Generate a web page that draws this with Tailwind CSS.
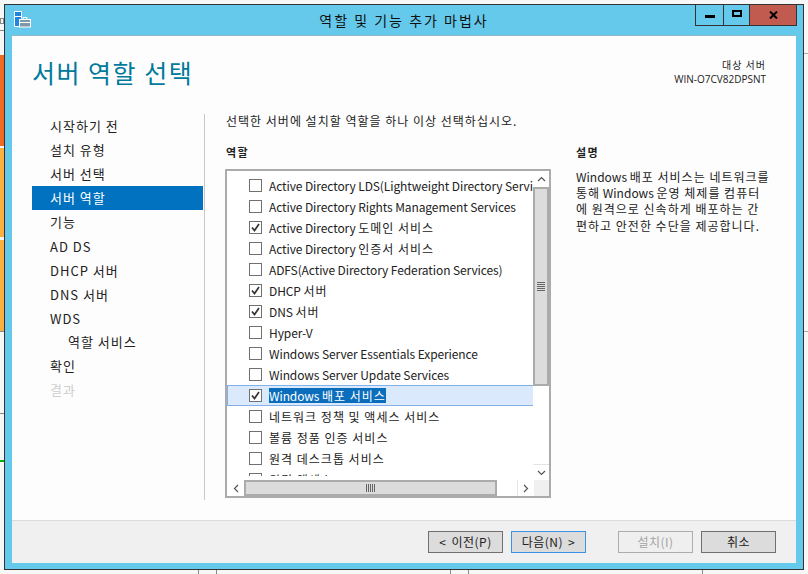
<!DOCTYPE html>
<html>
  <head>
    <meta charset="utf-8" />
    <title>역할 및 기능 추가 마법사</title>
    <script src="https://cdn.jsdelivr.net/npm/@tailwindcss/browser@4"></script>
  </head>

  <body class="w-[808px] h-[574px] overflow-hidden relative bg-[#f7f7f7]">
    <!-- desktop behind the wizard -->
    <div class="absolute left-0 top-[18px] w-[4px] h-[6px] border border-[#888]"></div>
    <div class="absolute left-0 top-[30px] w-[4px] h-px bg-[#888]"></div>
    <div class="absolute left-0 top-[55px] w-[4px] h-[91px] bg-[#f26a21]"></div>
    <div class="absolute left-0 top-[148px] w-[4px] h-[89px] bg-[#fbb040]"></div>
    <div class="absolute left-0 top-[240px] w-[4px] h-[91px] bg-[#fbb040]"></div>
    <div class="absolute left-0 top-[331px] w-[4px] h-px bg-[#888]"></div>
    <div class="absolute left-0 top-[413px] w-[4px] h-px bg-[#888]"></div>
    <div class="absolute left-0 top-[460px] w-[4px] h-[2px] bg-[#00b000]"></div>
    <div class="absolute right-0 top-[53px] w-[4px] h-px bg-[#aaa]"></div>
    <div class="absolute right-0 top-[331px] w-[4px] h-px bg-[#aaa]"></div>
    <div class="absolute left-[198px] top-[570px] w-px h-[4px] bg-[#888]"></div>
    <div class="absolute left-[216px] top-[570px] w-px h-[4px] bg-[#888]"></div>
    <div class="absolute left-[450px] top-[570px] w-px h-[4px] bg-[#888]"></div>
    <div class="absolute left-[468px] top-[570px] w-px h-[4px] bg-[#888]"></div>
    <div class="absolute left-[702px] top-[570px] w-px h-[4px] bg-[#888]"></div>

    <!-- wizard window -->
    <div class="absolute left-[4px] top-[4px] w-[800px] h-[566px] border border-[#333] bg-[#65c9eb] flex flex-col"
      style='font-family: "Noto Sans CJK KR", "Noto Sans", sans-serif;'>
      <!-- title bar -->
      <div class="h-[30px] flex items-start relative shrink-0">
        <svg class="absolute left-[9px] top-[6px]" width="17" height="17" viewBox="0 0 17 17" fill="none">
          <path d="M0.5 0.5H7.5V5.5H0.5Z" fill="#1e86e0" stroke="#fff" />
          <path d="M0.5 5.5V15.5H5.5M7.5 5.5V7.5" stroke="#fff" />
          <rect x="1" y="6" width="6" height="9" fill="#1e86e0" />
          <rect x="5.5" y="8.5" width="11" height="7.5" fill="#7f97a8" stroke="#fff" />
          <path d="M9 8.5V6.5H13V8.5M6 11.5H16" stroke="#fff" />
        </svg>
        <div class="flex-1 text-center text-[14px] tracking-[2px] leading-[30px] text-[#111]">역할 및 기능 추가 마법사</div>
        <div class="absolute right-[6px] top-0 flex h-[21px] border border-t-0 border-[#333]">
          <div class="w-[28px] border-r border-[#333] flex items-center justify-center">
            <div class="w-[10px] h-[3px] bg-black mt-[3px]"></div>
          </div>
          <div class="w-[26px] border-r border-[#333] flex items-center justify-center">
            <div class="w-[10px] h-[7px] border-2 border-black -mt-[3px]"></div>
          </div>
          <div class="w-[46px] bg-[#c15b50] flex items-center justify-center">
            <svg width="9" height="8" viewBox="0 0 9 8"><path d="M1 0.5 8 7.5M8 0.5 1 7.5" stroke="#000" stroke-width="2" /></svg>
          </div>
        </div>
      </div>

      <!-- content -->
      <div class="mx-[7px] flex-1 bg-[#fdfdfd] border-t border-[#8fb8cc] flex flex-col min-h-0">
        <div class="flex justify-between h-[77px] shrink-0">
          <h1 class="text-[#007a9c] text-[25px] leading-[36px] tracking-[1.5px] pl-[20px] pt-[18px]">서버 역할 선택</h1>
          <div class="text-right text-[10px] leading-[15px] text-[#222] pr-[30px] pt-[21px]">
            <div class="tracking-[1px]">대상 서버</div>
            <div style='font-family: "Open Sans", sans-serif;'>WIN-O7CV82DPSNT</div>
          </div>
        </div>

        <div class="flex flex-1 min-h-0">
          <!-- steps -->
          <nav class="w-[193px] h-[386px] mt-px border-r border-[#c8c8c8] text-[13px] tracking-[1px] text-[#222] shrink-0">
            <div class="h-[24px] leading-[24px] ml-[20px] pl-[18px]">시작하기 전</div>
            <div class="h-[24px] leading-[24px] ml-[20px] pl-[18px]">설치 유형</div>
            <div class="h-[24px] leading-[24px] ml-[20px] pl-[18px]">서버 선택</div>
            <div class="h-[24px] leading-[24px] ml-[20px] pl-[18px] mr-px bg-[#0072c0] text-white">서버 역할</div>
            <div class="h-[24px] leading-[24px] ml-[20px] pl-[18px]">기능</div>
            <div class="h-[24px] leading-[24px] ml-[20px] pl-[18px] mt-px">AD DS</div>
            <div class="h-[24px] leading-[24px] ml-[20px] pl-[18px]">DHCP 서버</div>
            <div class="h-[24px] leading-[24px] ml-[20px] pl-[18px]">DNS 서버</div>
            <div class="h-[24px] leading-[24px] ml-[20px] pl-[18px]">WDS</div>
            <div class="h-[24px] leading-[24px] ml-[20px] pl-[36px] -mt-px">역할 서비스</div>
            <div class="h-[24px] leading-[24px] ml-[20px] pl-[18px]">확인</div>
            <div class="h-[24px] leading-[24px] ml-[20px] pl-[18px] text-[#cfcfcf]">결과</div>
          </nav>

          <!-- roles -->
          <div class="pl-[21px] w-[346px] shrink-0 text-[12px] text-[#222]">
            <p class="h-[30px] leading-[16px] tracking-[1px]">선택한 서버에 설치할 역할을 하나 이상 선택하십시오.</p>
            <p class="h-[26px] leading-[18px] font-bold text-[11px] tracking-[1.5px]">역할</p>
            <div class="-ml-px w-[326px] h-[329px] border-2 border-[#ababab] bg-white relative overflow-hidden">
              <div class="h-[305px] overflow-hidden pr-[15px] pt-[4px] tracking-[-0.1px]">
                <div class="flex items-center h-[21px] pl-[22px] whitespace-nowrap overflow-hidden"><span class="w-[13px] h-[13px] border border-[#707070] shrink-0 mr-[7px]"></span>Active Directory LDS(Lightweight Directory Services)</div>
                <div class="flex items-center h-[21px] pl-[22px] whitespace-nowrap"><span class="w-[13px] h-[13px] border border-[#707070] shrink-0 mr-[7px]"></span>Active Directory Rights Management Services</div>
                <div class="flex items-center h-[21px] pl-[22px] whitespace-nowrap"><span class="w-[13px] h-[13px] border border-[#707070] shrink-0 mr-[7px] flex items-center justify-center"><svg width="9" height="9" viewBox="0 0 9 9"><path d="M1 4.5 3.5 7.5 8 1" fill="none" stroke="#333" stroke-width="1.7" /></svg></span>Active Directory&nbsp;<span class="tracking-[1px]">도메인 서비스</span></div>
                <div class="flex items-center h-[21px] pl-[22px] whitespace-nowrap"><span class="w-[13px] h-[13px] border border-[#707070] shrink-0 mr-[7px]"></span>Active Directory&nbsp;<span class="tracking-[1px]">인증서 서비스</span></div>
                <div class="flex items-center h-[21px] pl-[22px] whitespace-nowrap"><span class="w-[13px] h-[13px] border border-[#707070] shrink-0 mr-[7px]"></span>ADFS(Active Directory Federation Services)</div>
                <div class="flex items-center h-[21px] pl-[22px] whitespace-nowrap"><span class="w-[13px] h-[13px] border border-[#707070] shrink-0 mr-[7px] flex items-center justify-center"><svg width="9" height="9" viewBox="0 0 9 9"><path d="M1 4.5 3.5 7.5 8 1" fill="none" stroke="#333" stroke-width="1.7" /></svg></span>DHCP&nbsp;<span class="tracking-[1px]">서버</span></div>
                <div class="flex items-center h-[21px] pl-[22px] whitespace-nowrap"><span class="w-[13px] h-[13px] border border-[#707070] shrink-0 mr-[7px] flex items-center justify-center"><svg width="9" height="9" viewBox="0 0 9 9"><path d="M1 4.5 3.5 7.5 8 1" fill="none" stroke="#333" stroke-width="1.7" /></svg></span>DNS&nbsp;<span class="tracking-[1px]">서버</span></div>
                <div class="flex items-center h-[21px] pl-[22px] whitespace-nowrap"><span class="w-[13px] h-[13px] border border-[#707070] shrink-0 mr-[7px]"></span>Hyper-V</div>
                <div class="flex items-center h-[21px] pl-[22px] whitespace-nowrap"><span class="w-[13px] h-[13px] border border-[#707070] shrink-0 mr-[7px]"></span>Windows Server Essentials Experience</div>
                <div class="flex items-center h-[21px] pl-[22px] whitespace-nowrap"><span class="w-[13px] h-[13px] border border-[#707070] shrink-0 mr-[7px]"></span>Windows Server Update Services</div>
                <div class="flex items-center h-[21px] pl-[21px] whitespace-nowrap bg-[#dbe9fc] border border-[#84b0e8]"><span class="w-[13px] h-[13px] border border-[#707070] bg-white shrink-0 mr-[7px] flex items-center justify-center"><svg width="9" height="9" viewBox="0 0 9 9"><path d="M1 4.5 3.5 7.5 8 1" fill="none" stroke="#333" stroke-width="1.7" /></svg></span><span class="bg-[#0a6ebd] text-white h-[15px] leading-[15px]">Windows <span class="tracking-[1px]">배포 서비스</span></span></div>
                <div class="flex items-center h-[21px] pl-[22px] whitespace-nowrap tracking-[1px]"><span class="w-[13px] h-[13px] border border-[#707070] shrink-0 mr-[7px]"></span>네트워크 정책 및 액세스 서비스</div>
                <div class="flex items-center h-[21px] pl-[22px] whitespace-nowrap tracking-[1px]"><span class="w-[13px] h-[13px] border border-[#707070] shrink-0 mr-[7px]"></span>볼륨 정품 인증 서비스</div>
                <div class="flex items-center h-[21px] pl-[22px] whitespace-nowrap tracking-[1px]"><span class="w-[13px] h-[13px] border border-[#707070] shrink-0 mr-[7px]"></span>원격 데스크톱 서비스</div>
                <div class="flex items-center h-[21px] pl-[22px] whitespace-nowrap tracking-[1px]"><span class="w-[13px] h-[13px] border border-[#707070] shrink-0 mr-[7px]"></span>원격 액세스</div>
              </div>

              <!-- vertical scrollbar -->
              <div class="absolute right-0 top-0 w-[16px] h-[310px] bg-white flex flex-col">
                <div class="h-[16px] flex items-center justify-center">
                  <svg width="9" height="6" viewBox="0 0 9 6"><path d="M1 5 4.5 1.5 8 5" fill="none" stroke="#555" stroke-width="1.2" /></svg>
                </div>
                <div class="h-[199px] bg-[#dcdcdc] border-2 border-[#ababab] flex items-center justify-center">
                  <div class="w-[8px] h-[9px] bg-[repeating-linear-gradient(#666_0,#666_1px,transparent_1px,transparent_2px)]"></div>
                </div>
                <div class="flex-1"></div>
                <div class="h-[17px] border-t border-[#e4e4e4] flex items-center justify-center">
                  <svg width="9" height="6" viewBox="0 0 9 6"><path d="M1 1 4.5 4.5 8 1" fill="none" stroke="#555" stroke-width="1.2" /></svg>
                </div>
              </div>

              <!-- horizontal scrollbar -->
              <div class="absolute left-0 bottom-0 right-0 h-[16px] flex bg-white">
                <div class="w-[17px] flex items-center justify-center">
                  <svg width="6" height="9" viewBox="0 0 6 9"><path d="M5 1 1.5 4.5 5 8" fill="none" stroke="#555" stroke-width="1.2" /></svg>
                </div>
                <div class="w-[253px] bg-[#dcdcdc] border-2 border-[#ababab] flex items-center justify-center">
                  <div class="w-[9px] h-[8px] bg-[repeating-linear-gradient(90deg,#666_0,#666_1px,transparent_1px,transparent_2px)]"></div>
                </div>
                <div class="flex-1"></div>
                <div class="w-[17px] border-l border-[#e4e4e4] flex items-center justify-center">
                  <svg width="6" height="9" viewBox="0 0 6 9"><path d="M1 1 4.5 4.5 1 8" fill="none" stroke="#555" stroke-width="1.2" /></svg>
                </div>
                <div class="w-[15px] bg-[#f0f0f0]"></div>
              </div>
            </div>
          </div>

          <!-- description -->
          <div class="pl-[25px] flex-1 text-[12px] text-[#222] pt-[30px]">
            <p class="h-[26px] leading-[18px] font-bold text-[11px] tracking-[1.5px]">설명</p>
            <p class="leading-[16.2px] whitespace-nowrap"><span>Windows</span> <span class="tracking-[1px]">배포 서비스는 네트워크를</span><br /><span class="tracking-[1px]">통해</span> Windows <span class="tracking-[1px]">운영 체제를 컴퓨터</span><br /><span class="tracking-[1px]">에 원격으로 신속하게 배포하는 간</span><br /><span class="tracking-[1px]">편하고 안전한 수단을 제공합니다.</span></p>
          </div>
        </div>

        <!-- footer -->
        <div class="h-[43px] bg-[#f0f0f0] border-t border-[#dcdcdc] shrink-0 flex items-start pt-[10px] text-[12px] text-[#222] tracking-[0.5px]">
          <div class="ml-[416px] w-[75px] h-[22px] bg-[#dcdcdc] border border-[#707070] flex items-center justify-center gap-[5px]"><span>&lt;</span><span>이전(P)</span></div>
          <div class="ml-[8px] w-[75px] h-[22px] bg-[#dcdcdc] border border-[#3c93e6] flex items-center justify-center gap-[5px]"><span>다음(N)</span><span>&gt;</span></div>
          <div class="ml-[32px] w-[75px] h-[22px] bg-[#efefef] border border-[#adadad] text-[#a3a3a3] flex items-center justify-center">설치(I)</div>
          <div class="ml-[8px] w-[75px] h-[22px] bg-[#dcdcdc] border border-[#707070] flex items-center justify-center">취소</div>
        </div>
      </div>
      <div class="h-[6px] shrink-0"></div>
    </div>
  </body>
</html>
